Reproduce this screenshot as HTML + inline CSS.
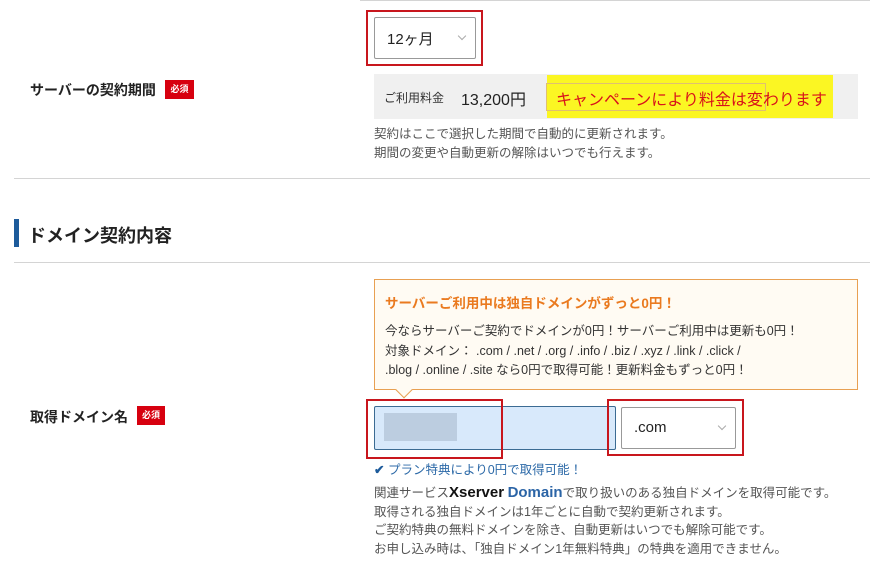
<!DOCTYPE html>
<html><head><meta charset="utf-8"><style>
*{margin:0;padding:0;box-sizing:border-box}
body{width:870px;height:566px;background:#fff;position:relative;overflow:hidden;font-family:"Liberation Sans","Noto Sans CJK JP",sans-serif;color:#333}
.a{position:absolute;white-space:nowrap}
.line{position:absolute;height:1px;background:#d4d4d4}
.lab{font-size:14px;font-weight:bold;color:#222}
.badge{position:absolute;background:#d7000f;color:#fff;font-size:9px;font-weight:bold;text-align:center;line-height:19px}
.red{position:absolute;border:2px solid #c8161d}
.sel{position:absolute;border:1px solid #999;border-radius:2px;background:#fff;font-size:15px;color:#222}
.chev{position:absolute;width:6px;height:6px;border-right:1px solid #aaa;border-bottom:1px solid #aaa;transform:rotate(45deg)}
.note{font-size:12.5px;color:#555;line-height:18.5px}
</style></head><body>
<div class="line" style="left:360px;top:0;width:510px"></div>
<div class="a lab" style="left:30px;top:80px">サーバーの契約期間</div>
<div class="badge" style="left:165px;top:80px;width:29px;height:19px">必須</div>
<div class="red" style="left:366px;top:10px;width:117px;height:56px"></div>
<div class="sel" style="left:374px;top:17px;width:102px;height:42px"><span class="a" style="left:12px;top:10px">12ヶ月</span><div class="chev" style="left:84px;top:15px"></div></div>
<div class="a" style="left:374px;top:74px;width:484px;height:45px;background:#f0f0f0"></div>
<div class="a" style="left:384px;top:89px;font-size:12px;color:#333">ご利用料金</div>
<div class="a" style="left:461px;top:86px;font-size:16px;color:#222">13,200円</div>
<div class="a" style="left:547px;top:75px;width:286px;height:43px;background:#fbf623"></div>
<div class="a" style="left:546px;top:83px;width:220px;height:28px;border:1px solid #e0c070"></div>
<div class="a" style="left:556px;top:86px;font-size:16px;color:#d8121b">キャンペーンにより料金は変わります</div>
<div class="a note" style="left:374px;top:125px">契約はここで選択した期間で自動的に更新されます。<br>期間の変更や自動更新の解除はいつでも行えます。</div>
<div class="line" style="left:14px;top:178px;width:856px"></div>
<div class="a" style="left:14px;top:219px;width:5px;height:28px;background:#1d5b9b"></div>
<div class="a" style="left:28px;top:222px;font-size:18px;font-weight:bold;color:#222">ドメイン契約内容</div>
<div class="line" style="left:14px;top:262px;width:856px"></div>
<div class="a" style="left:374px;top:279px;width:484px;height:111px;border:1px solid #e8a052;background:#fffbf3"></div>
<div class="a" style="left:398px;top:384px;width:12px;height:12px;background:#fffbf3;border-right:1px solid #e8a052;border-bottom:1px solid #e8a052;transform:rotate(45deg)"></div>
<div class="a" style="left:385px;top:292px;font-size:13.5px;font-weight:bold;color:#ea7a1f">サーバーご利用中は独自ドメインがずっと0円！</div>
<div class="a" style="left:385px;top:322px;font-size:12.5px;color:#333;line-height:19.5px">今ならサーバーご契約でドメインが0円！サーバーご利用中は更新も0円！<br>対象ドメイン： .com / .net / .org / .info / .biz / .xyz / .link / .click /<br>.blog / .online / .site なら0円で取得可能！更新料金もずっと0円！</div>
<div class="a lab" style="left:30px;top:407px">取得ドメイン名</div>
<div class="badge" style="left:137px;top:406px;width:28px;height:19px">必須</div>
<div class="a" style="left:374px;top:406px;width:242px;height:44px;background:#d8e9fb;border:1px solid #3b6b93;border-radius:2px"></div>
<div class="a" style="left:384px;top:413px;width:73px;height:28px;background:#bccde0"></div>
<div class="red" style="left:366px;top:399px;width:137px;height:60px"></div>
<div class="red" style="left:607px;top:399px;width:137px;height:57px"></div>
<div class="sel" style="left:621px;top:407px;width:115px;height:42px"><span class="a" style="left:12px;top:11px">.com</span><div class="chev" style="left:97px;top:15px"></div></div>
<div class="a" style="left:374px;top:459px;font-size:12.5px;color:#2d6aa8"><span style="color:#1d5b9b;font-weight:bold">✔</span> プラン特典により0円で取得可能！</div>
<div class="a note" style="left:374px;top:484px">関連サービス<b style="color:#111;font-size:15px">Xserver</b> <b style="color:#2b64a6;font-size:15px">Domain</b>で取り扱いのある独自ドメインを取得可能です。<br>取得される独自ドメインは1年ごとに自動で契約更新されます。<br>ご契約特典の無料ドメインを除き、自動更新はいつでも解除可能です。<br>お申し込み時は、「独自ドメイン1年無料特典」の特典を適用できません。</div>
</body></html>
